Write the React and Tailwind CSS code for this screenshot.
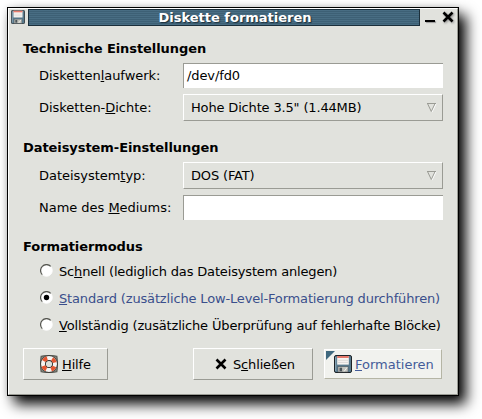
const U = ({ children }) => (
  <span className="underline decoration-1 underline-offset-1 [text-decoration-skip-ink:none]">{children}</span>
);

const Floppy = ({ className }) => (
  <svg viewBox="0 0 18 18" className={className}>
    <rect x="0.5" y="0.5" width="17" height="17" rx="1.5" fill="#58798c" stroke="#1d2327" />
    <path d="M1.7 2v14" stroke="#8faabb" />
    <rect x="3.2" y="1" width="11.6" height="8.6" fill="#f8f5f2" />
    <rect x="3.2" y="1" width="11.6" height="2" fill="#e57a6c" />
    <path d="M4 5.3h10M4 7.4h10" stroke="#d2cecb" strokeWidth="0.7" />
    <rect x="4" y="11.7" width="10" height="5.3" fill="#c3c4be" stroke="#4b5256" strokeWidth="0.5" />
    <rect x="5.5" y="12.7" width="2.6" height="3.6" fill="#4a5358" />
    <path d="M10 16.5l3-4" stroke="#f2f2ee" />
  </svg>
);

const Buoy = () => (
  <svg viewBox="0 0 18 18" className="h-[18px] w-[18px] shrink-0">
    <path d="M1.2 1.4Q9-.4 16.8 1.4Q18 9 16.8 16.6Q9 18.4 1.2 16.6Q0 9 1.2 1.4Z" fill="#8b8d85" stroke="#5c5e57" strokeWidth="1.3" />
    <circle cx="9" cy="9" r="3.6" fill="#dfe0da" />
    <circle cx="9" cy="9" r="5.9" fill="none" stroke="#30312e" strokeWidth="5.6" />
    <circle cx="9" cy="9" r="6" fill="none" stroke="#f6f3f0" strokeWidth="4" />
    <circle cx="9" cy="9" r="6" fill="none" stroke="#e5552f" strokeWidth="4" strokeDasharray="4.3 5.125" strokeDashoffset="-2.56" />
  </svg>
);

const Cross = ({ className }) => (
  <svg viewBox="0 0 12 12" className={className}>
    <path d="M1.5 1.5L10.5 10.5M10.5 1.5L1.5 10.5" stroke="#000" strokeWidth="2.6" />
  </svg>
);

const Label = ({ children }) => (
  <div className="w-[144px] shrink-0 tracking-[-0.03px] whitespace-nowrap">{children}</div>
);

const Heading = ({ children }) => (
  <div className="h-full pt-px font-bold tracking-[-0.07px]">{children}</div>
);

const Field = ({ value }) => (
  <div className="flex h-[25px] w-[260px] items-center border-t border-l border-[#9a9b94] bg-white pl-[3px] tracking-[-0.1px]">{value}</div>
);

const Combo = ({ value }) => (
  <div className="flex h-[27px] w-[260px] items-center justify-between border border-t-white border-r-[#9a9b94] border-b-[#9a9b94] border-l-white pr-[5px] pl-[7px]">
    <span className="tracking-[-0.16px]">{value}</span>
    <svg viewBox="0 0 11 11" className="h-[11px] w-[11px]" fill="none">
      <path d="M10 1.5L5.8 10" stroke="#fff" strokeWidth="1.3" />
      <path d="M1 1.5H10M1.5 1.5L5.3 9.5L9.1 1.5" stroke="#9a9b94" />
    </svg>
  </div>
);

const Radio = ({ checked, children }) => (
  <div className={"flex h-[27px] items-center tracking-[-0.16px] whitespace-nowrap " + (checked ? "text-[#3a4f8c]" : "")}>
    <svg viewBox="0 0 13 13" className="mr-[6px] h-[13px] w-[13px] shrink-0">
      <circle cx="6.5" cy="6.5" r="5.7" fill="#fff" stroke="#fff" />
      <path d="M2.3 10.7A5.9 5.9 0 0 1 10.7 2.3" fill="none" stroke="#54554f" strokeWidth="1.2" />
      {checked && <circle cx="6.5" cy="6.5" r="2.7" fill="#000" />}
    </svg>
    <span className="pt-[2px]">{children}</span>
  </div>
);

export default function App() {
  return (
    <div className="h-[419px] w-[482px] overflow-hidden bg-white pt-[7px] pl-[7px] font-['DejaVu_Sans',sans-serif] text-[13px] leading-4 text-black">
      <div className="h-[389px] w-[452px] border border-black bg-[#e1e2dd] shadow-[7px_8px_13px_#000,0_0_6px_rgba(0,0,0,0.12)]">
        <div className="h-[387px] border border-t-white border-r-[#9a9b94] border-b-[#9a9b94] border-l-white">
          <div className="flex h-[17px]">
            <Floppy className="mt-px ml-[2px] h-[14px] w-[14px]" />
            <div className="ml-[3px] flex h-[17px] w-[392px] items-center justify-center border border-[#1b2f3b] bg-[repeating-linear-gradient(#486d83_0_1px,#3d6075_1px_2px)] pl-[22px] font-bold text-white [text-shadow:1px_1px_1px_#1b2f3b]">
              <span>Diskette formatieren</span>
            </div>
            <div className="mt-[11px] ml-[5px] h-[2px] w-[10px] bg-black shadow-[1px_1px_1px_#999]" />
            <Cross className="mt-[2px] ml-[7px] h-3 w-3 drop-shadow-[1px_1px_1px_#888]" />
          </div>
          <div className="pl-[14px]">
            <div className="mt-[14px] h-[23px]"><Heading>Technische Einstellungen</Heading></div>
            <div className="flex h-[25px] items-center pl-4">
              <Label>Disketten<U>l</U>aufwerk:</Label>
              <Field value="/dev/fd0" />
            </div>
            <div className="mt-[6px] flex h-[27px] items-center pl-4">
              <Label>Disketten-<U>D</U>ichte:</Label>
              <Combo value={'Hohe Dichte 3.5" (1.44MB)'} />
            </div>
            <div className="mt-[18px] h-[23px]"><Heading>Dateisystem-Einstellungen</Heading></div>
            <div className="flex h-[27px] items-center pl-4">
              <Label>Dateisystem<U>t</U>yp:</Label>
              <Combo value="DOS (FAT)" />
            </div>
            <div className="mt-[6px] flex h-[25px] items-center pl-4">
              <Label>Name des <U>M</U>ediums:</Label>
              <Field value="" />
            </div>
            <div className="mt-[18px] h-[19px]"><Heading>Formatiermodus</Heading></div>
            <div className="pl-[17px]">
              <Radio>Sc<U>h</U>nell (lediglich das Dateisystem anlegen)</Radio>
              <Radio checked><U>S</U>tandard (zusätzliche Low-Level-Formatierung durchführen)</Radio>
              <Radio><U>V</U>ollständig (zusätzliche Überprüfung auf fehlerhafte Blöcke)</Radio>
            </div>
            <div className="mt-[10px] flex h-8 tracking-[-0.15px]">
              <div className="flex w-[85px] items-center border border-t-white border-r-[#9a9b94] border-b-[#9a9b94] border-l-white pl-4">
                <Buoy />
                <span className="ml-[4px] pt-px"><U>H</U>ilfe</span>
              </div>
              <div className="ml-[85px] flex w-[120px] items-center border border-t-white border-r-[#9a9b94] border-b-[#9a9b94] border-l-white pl-[21px]">
                <Cross className="h-3 w-3" />
                <span className="ml-[6px] pt-px">S<U>c</U>hließen</span>
              </div>
              <div className="relative mt-px ml-[11px] flex h-[30px] w-[118px] items-center border border-t-white border-r-[#b5b5a5] border-b-[#b5b5a5] border-l-white bg-[#f1f2ee] pl-[9px] tracking-normal text-[#445c99]">
                <svg viewBox="0 0 9 9" className="absolute top-px left-px h-[9px] w-[9px]"><path d="M0 0H9L0 9Z" fill="#3f687e" /></svg>
                <Floppy className="h-[18px] w-[18px]" />
                <span className="ml-[3px] pt-px"><U>F</U>ormatieren</span>
              </div>
            </div>
          </div>
        </div>
      </div>
    </div>
  );
}
